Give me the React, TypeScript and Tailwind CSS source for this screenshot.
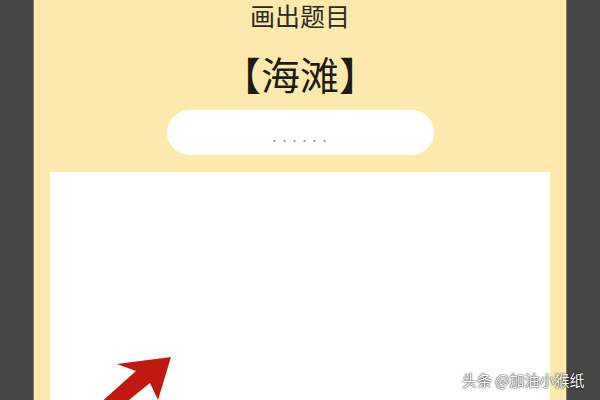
import React from "react";

export default function App() {
  return (
    <div className="relative w-[600px] h-[400px] overflow-hidden bg-[#464647] flex justify-center" style={{ fontFamily: '"Noto Sans CJK SC", "Noto Sans", sans-serif' }}>
      <div className="w-[534px] h-full bg-[#fee9ac] flex flex-col items-center border-x border-[#8a7d5a]">
        <div className="mt-[0px] text-[25px] leading-[30px] text-[#2b2a26]">画出题目</div>
        <div className="mt-[18px] text-[39px] leading-[50px] text-[#1d1c1a]">【海滩】</div>
        <div className="mt-[12px] w-[267px] h-[45px] rounded-full bg-white flex items-end justify-center pb-[10px]">
          <span className="text-[9px] leading-[9px] text-[#8a8a8a] tracking-[1px]">······</span>
        </div>
        <div className="relative mt-[17px] w-[500px] flex-1 bg-white">
          <svg className="absolute left-0 top-0" width="500" height="228" viewBox="0 0 500 228">
            <polygon points="121,185 67,192 86,199 40,240 64,240 100,211 108,228" fill="#c01a10" />
          </svg>
        </div>
      </div>
      <div className="absolute left-[462px] top-[369px] text-[15px] leading-[22px] text-white" style={{ textShadow: "0 0 2px rgba(0,0,0,0.8), 0 0 1px rgba(0,0,0,0.8)" }}>
        头条 @加油小猴纸
      </div>
    </div>
  );
}
